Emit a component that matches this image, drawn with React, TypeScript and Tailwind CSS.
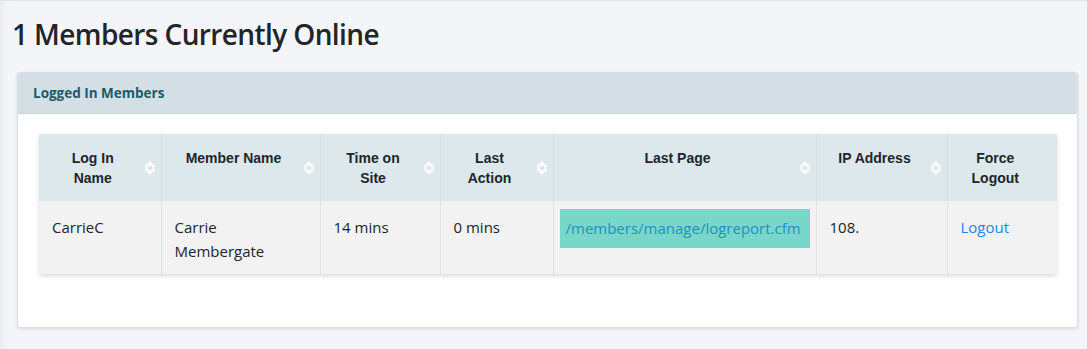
import React from "react";

const SortIcon = () => (
  <svg width="12" height="16" viewBox="0 0 12 16" className="absolute right-[5px] top-1/2 -translate-y-1/2 mt-[1px]">
    <path d="M2.5 6.5 L6 3 L9.5 6.5" fill="none" stroke="#ffffff" strokeWidth="2.6" strokeLinecap="square" />
    <path d="M2.5 9.5 L6 13 L9.5 9.5" fill="none" stroke="#ffffff" strokeWidth="2.6" strokeLinecap="square" />
  </svg>
);

const cols: { label: React.ReactNode; w: string; sort: boolean }[] = [
  { label: <>Log In<br />Name</>, w: "w-[122px]", sort: true },
  { label: <>Member Name</>, w: "w-[159px]", sort: true },
  { label: <>Time on<br />Site</>, w: "w-[120px]", sort: true },
  { label: <>Last<br />Action</>, w: "w-[113px]", sort: true },
  { label: <>Last Page</>, w: "w-[263px]", sort: true },
  { label: <>IP Address</>, w: "w-[131px]", sort: true },
  { label: <>Force<br />Logout</>, w: "w-[110px]", sort: false },
];

export default function App() {
  const body = "font-['Segoe_UI','Open_Sans',sans-serif]";
  return (
    <div className="min-h-[349px] w-[1087px] bg-[#f4f5f9] border-t border-[#e2e3e8] shadow-[inset_8px_0_8px_-6px_rgba(0,0,0,0.06)] pl-[17px] pr-[9px] pt-[13px] pb-[21px]">
      <h1 className={`${body} text-[28px] leading-[40px] text-[#212529] font-semibold tracking-[-0.6px] -ml-[5px] mb-[18px]`}>
        1 Members Currently Online
      </h1>
      <div className="bg-white border border-[#dcdfe3] rounded-[3px] shadow-[0_1px_3px_rgba(0,0,0,0.12)]">
        <div className="h-[41px] bg-[#d3dfe5] border-b border-[#c9d5db] flex items-center px-[15px] rounded-t-[3px]">
          <span className={`${body} text-[13.5px] font-bold text-[#1b5b68]`}>Logged In Members</span>
        </div>
        <div className="px-[21px] pt-[20px] pb-[53px]">
          <table className="border-collapse w-[1018px] shadow-[0_2px_4px_rgba(0,0,0,0.15)] table-fixed">
            <thead>
              <tr className="bg-[#dde8ed]">
                {cols.map((c, i) => (
                  <th
                    key={i}
                    className={`${c.w} relative border-x border-[#d6e0e5] first:border-l-0 last:border-r-0 align-top pl-[10px] pr-[24px] pt-[14px] pb-[12px] h-[66px] font-['Liberation_Sans',Arial,sans-serif] text-[14px] leading-[20px] font-bold text-[#212529] text-center`}
                  >
                    {c.label}
                    {c.sort && <SortIcon />}
                  </th>
                ))}
              </tr>
            </thead>
            <tbody>
              <tr className={`bg-[#f2f2f2] ${body} text-[15px] leading-[24px] text-[#212529] align-top`}>
                <td className="border-x border-t border-[#dee3e6] border-l-0 px-[6px] pt-[8px] pb-[5px]">
                  <div className="px-[7px] py-[6px]">CarrieC</div>
                </td>
                <td className="border-x border-t border-[#dee3e6] px-[6px] pt-[8px] pb-[5px]">
                  <div className="px-[7px] py-[6px]">Carrie<br />Membergate</div>
                </td>
                <td className="border-x border-t border-[#dee3e6] px-[6px] pt-[8px] pb-[5px]">
                  <div className="px-[7px] py-[6px]">14 mins</div>
                </td>
                <td className="border-x border-t border-[#dee3e6] px-[6px] pt-[8px] pb-[5px]">
                  <div className="px-[7px] py-[6px]">0 mins</div>
                </td>
                <td className="border-x border-t border-[#dee3e6] px-[6px] pt-[8px] pb-[5px]">
                  <div className="bg-[#79d7c9] px-[6px] py-[7px] leading-[25px] whitespace-nowrap">
                    <a className="text-[#1e90c6]">/members/manage/logreport.cfm</a>
                  </div>
                </td>
                <td className="border-x border-t border-[#dee3e6] px-[6px] pt-[8px] pb-[5px]">
                  <div className="px-[7px] py-[6px]">108.</div>
                </td>
                <td className="border-x border-t border-[#dee3e6] border-r-0 px-[6px] pt-[8px] pb-[5px]">
                  <div className="px-[7px] py-[6px]"><a className="text-[#1c86ee]">Logout</a></div>
                </td>
              </tr>
            </tbody>
          </table>
        </div>
      </div>
    </div>
  );
}
